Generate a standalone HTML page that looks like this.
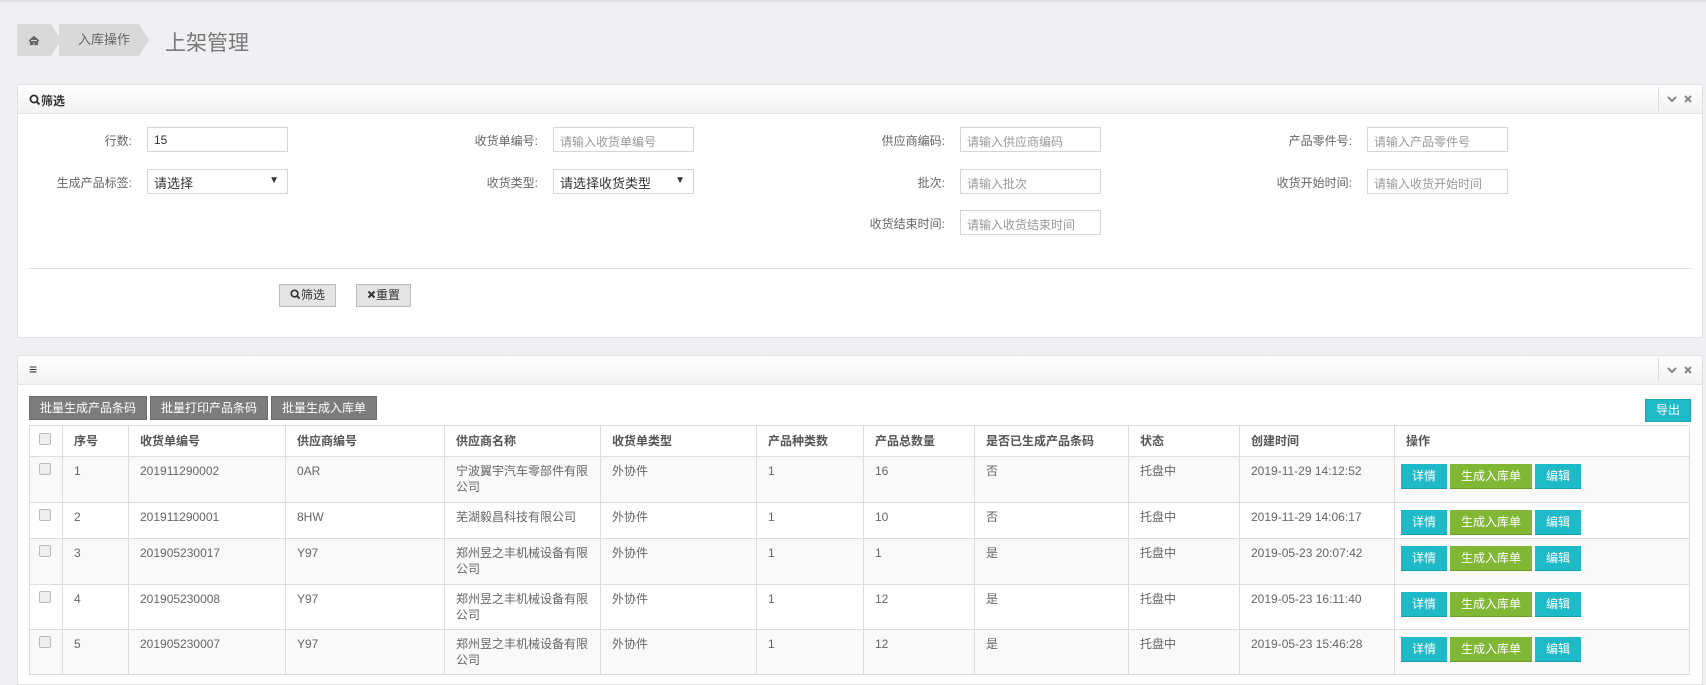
<!DOCTYPE html>
<html><head><meta charset="utf-8"><style>
*{box-sizing:border-box;margin:0;padding:0}
body{width:1706px;height:676px;overflow:hidden;background:#eef0f3;font-family:"Liberation Sans","Noto Sans CJK SC",sans-serif;font-size:12px;color:#666;position:relative}
.abs{position:absolute}
.panel{position:absolute;left:17px;width:1686px;background:#fff;border:1px solid #e2e2e2}
.ph{height:29px;background:linear-gradient(#fff,#f2f2f2);border-bottom:1px solid #e5e5e5;position:relative}
.ph .ttl{position:absolute;left:11px;top:7px;font-size:12px;font-weight:bold;color:#333}
.ph .tools{position:absolute;right:0;top:2px;width:44px;height:24px;border-left:1px solid #ddd}
.lbl{position:absolute;text-align:right;width:150px;font-size:12px;color:#666}
.inp{position:absolute;width:141px;height:25px;border:1px solid #d5d5d5;font-size:12px;color:#999;padding:5px 6px;background:#fff}
.inp.v{color:#333}
.btn{position:absolute;height:23px;border:1px solid #bbb;background:#e4e4e4;font-size:12px;color:#333;text-align:center;line-height:21px}
.gb{position:absolute;top:40px;height:24px;background:#7c7c7c;border:1px solid #6d6d6d;color:#fff;font-size:12px;text-align:center;line-height:22px}
table{position:absolute;left:11px;top:69px;border-collapse:collapse;width:1661px;table-layout:fixed}
td,th{border:1px solid #ddd;text-align:left;vertical-align:top;padding:6px 11px;line-height:16px;font-size:12px;color:#666;font-weight:normal}
th{font-weight:bold;color:#555;padding-top:7px}
tr.o td{background:#f9f9f9}
.cb{display:inline-block;width:12px;height:12px;border:1px solid #bbb;border-radius:2px;background:#eee;margin-left:-2px}
td.op{padding:7px 6px 0 6px}
.ab{display:inline-block;height:25px;line-height:25px;color:#fff;text-align:center;margin-right:3px;font-size:12px;vertical-align:top}
.c{background:#1fbac7;width:46px;border-bottom:1px solid #15a0ac}
.g{background:#80b735;width:82px;border-bottom:1px solid #6c9c28}
</style></head><body>
<div class="abs" style="left:0;top:0;width:1706px;height:2px;background:#e2e3e6"></div>
<div class="abs" style="left:17px;top:24px;width:34px;height:32px;background:#d9d9d9"><svg width="34" height="32" viewBox="0 0 34 32"><path d="M12 17 L17 12.5 L22 17 M13.5 16 V20.5 H16 V18 H18 V20.5 H20.5 V16" fill="#666" stroke="#666" stroke-width="1.2"/></svg></div>
<div class="abs" style="left:51px;top:24px;width:0;height:0;border-top:16px solid transparent;border-bottom:16px solid transparent;border-left:10px solid #d9d9d9"></div>
<div class="abs" style="left:59px;top:24px;width:80px;height:32px;background:#d9d9d9;color:#666;font-size:13px;line-height:32px;padding-left:19px">入库操作</div>
<div class="abs" style="left:139px;top:24px;width:0;height:0;border-top:16px solid transparent;border-bottom:16px solid transparent;border-left:10px solid #d9d9d9"></div>
<div class="abs" style="left:165px;top:27px;font-size:21px;color:#777">上架管理</div>

<div class="panel" style="top:84px;height:254px">
<div class="ph"><span class="ttl"><svg width="12" height="12" viewBox="0 0 12 12" style="vertical-align:-1px"><circle cx="5" cy="5" r="3.6" fill="none" stroke="#333" stroke-width="1.8"/><path d="M7.5 7.5 L10.5 10.5" stroke="#333" stroke-width="2"/></svg>筛选</span><span class="tools"><svg width="44" height="24"><path d="M9 10 L13 14 L17 10" fill="none" stroke="#888" stroke-width="2"/><path d="M26 9 L32 15 M32 9 L26 15" stroke="#888" stroke-width="2"/></svg></span></div>
</div>
<div class="lbl" style="left:-18px;top:132px">行数:</div><div class="inp v" style="left:147px;top:127px">15</div>
<div class="lbl" style="left:-18px;top:174px">生成产品标签:</div><div class="inp v" style="left:147px;top:169px;font-size:13px;padding-top:3px">请选择<span style="position:absolute;right:8px;top:5px;font-size:10px">▼</span></div>
<div class="lbl" style="left:388px;top:132px">收货单编号:</div><div class="inp" style="left:553px;top:127px">请输入收货单编号</div>
<div class="lbl" style="left:388px;top:174px">收货类型:</div><div class="inp v" style="left:553px;top:169px;font-size:13px;padding-top:3px">请选择收货类型<span style="position:absolute;right:8px;top:5px;font-size:10px">▼</span></div>
<div class="lbl" style="left:795px;top:132px">供应商编码:</div><div class="inp" style="left:960px;top:127px">请输入供应商编码</div>
<div class="lbl" style="left:795px;top:174px">批次:</div><div class="inp" style="left:960px;top:169px">请输入批次</div>
<div class="lbl" style="left:795px;top:215px">收货结束时间:</div><div class="inp" style="left:960px;top:210px">请输入收货结束时间</div>
<div class="lbl" style="left:1202px;top:132px">产品零件号:</div><div class="inp" style="left:1367px;top:127px">请输入产品零件号</div>
<div class="lbl" style="left:1202px;top:174px">收货开始时间:</div><div class="inp" style="left:1367px;top:169px">请输入收货开始时间</div>
<div class="abs" style="left:29px;top:268px;width:1663px;height:1px;background:#e2e2e2"></div>
<div class="btn" style="left:279px;top:284px;width:57px"><svg width="11" height="11" viewBox="0 0 12 12" style="vertical-align:-1px"><circle cx="5" cy="5" r="3.6" fill="none" stroke="#333" stroke-width="1.8"/><path d="M7.5 7.5 L10.5 10.5" stroke="#333" stroke-width="2"/></svg>筛选</div>
<div class="btn" style="left:356px;top:284px;width:55px"><svg width="9" height="9" viewBox="0 0 9 9"><path d="M1.5 1.5 L7.5 7.5 M7.5 1.5 L1.5 7.5" stroke="#333" stroke-width="2"/></svg>重置</div>

<div class="panel" style="top:355px;height:330px">
<div class="ph"><span class="ttl" style="font-size:14px;top:5px">≡</span><span class="tools"><svg width="44" height="24"><path d="M9 10 L13 14 L17 10" fill="none" stroke="#888" stroke-width="2"/><path d="M26 9 L32 15 M32 9 L26 15" stroke="#888" stroke-width="2"/></svg></span></div>
<div class="gb" style="left:11px;width:118px">批量生成产品条码</div>
<div class="gb" style="left:132px;width:118px">批量打印产品条码</div>
<div class="gb" style="left:253px;width:106px">批量生成入库单</div>
<div class="gb" style="left:1627px;width:46px;background:#1fbac7;border-color:#16a5b1;top:43px;height:23px;line-height:21px">导出</div>
<table>
<colgroup><col style="width:33px"><col style="width:66px"><col style="width:157px"><col style="width:159px"><col style="width:156px"><col style="width:156px"><col style="width:107px"><col style="width:111px"><col style="width:154px"><col style="width:111px"><col style="width:155px"><col></colgroup>
<tr style="height:31px"><th><span class="cb"></span></th><th>序号</th><th>收货单编号</th><th>供应商编号</th><th>供应商名称</th><th>收货单类型</th><th>产品种类数</th><th>产品总数量</th><th>是否已生成产品条码</th><th>状态</th><th>创建时间</th><th>操作</th></tr>
<tr class="o" style="height:46px"><td><span class="cb"></span></td><td>1</td><td>201911290002</td><td>0AR</td><td>宁波翼宇汽车零部件有限公司</td><td>外协件</td><td>1</td><td>16</td><td>否</td><td>托盘中</td><td>2019-11-29 14:12:52</td><td class="op"><span class="ab c">详情</span><span class="ab g">生成入库单</span><span class="ab c">编辑</span></td></tr>
<tr style="height:36px"><td><span class="cb"></span></td><td>2</td><td>201911290001</td><td>8HW</td><td>芜湖毅昌科技有限公司</td><td>外协件</td><td>1</td><td>10</td><td>否</td><td>托盘中</td><td>2019-11-29 14:06:17</td><td class="op"><span class="ab c">详情</span><span class="ab g">生成入库单</span><span class="ab c">编辑</span></td></tr>
<tr class="o" style="height:46px"><td><span class="cb"></span></td><td>3</td><td>201905230017</td><td>Y97</td><td>郑州昱之丰机械设备有限公司</td><td>外协件</td><td>1</td><td>1</td><td>是</td><td>托盘中</td><td>2019-05-23 20:07:42</td><td class="op"><span class="ab c">详情</span><span class="ab g">生成入库单</span><span class="ab c">编辑</span></td></tr>
<tr style="height:45px"><td><span class="cb"></span></td><td>4</td><td>201905230008</td><td>Y97</td><td>郑州昱之丰机械设备有限公司</td><td>外协件</td><td>1</td><td>12</td><td>是</td><td>托盘中</td><td>2019-05-23 16:11:40</td><td class="op"><span class="ab c">详情</span><span class="ab g">生成入库单</span><span class="ab c">编辑</span></td></tr>
<tr class="o" style="height:45px"><td><span class="cb"></span></td><td>5</td><td>201905230007</td><td>Y97</td><td>郑州昱之丰机械设备有限公司</td><td>外协件</td><td>1</td><td>12</td><td>是</td><td>托盘中</td><td>2019-05-23 15:46:28</td><td class="op"><span class="ab c">详情</span><span class="ab g">生成入库单</span><span class="ab c">编辑</span></td></tr>
</table>
</div>
</body></html>
